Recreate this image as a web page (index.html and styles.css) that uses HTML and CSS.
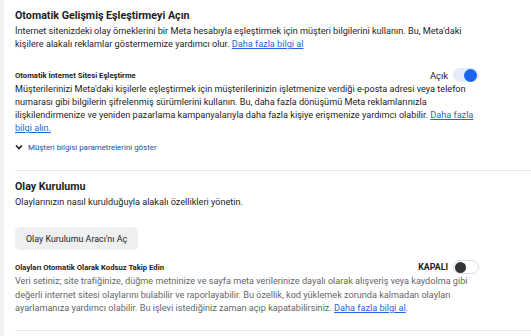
FILE: index.html
```html
<!DOCTYPE html>
<html lang="tr">
<head>
    <meta charset="UTF-8">
    <meta name="viewport" content="width=device-width, initial-scale=1.0">
    <title>Olay Ayarları</title>
    <link rel="stylesheet" href="styles.css">
</head>
<body>
    <div class="panel">

        <!-- Gelişmiş eşleştirme -->
        <section class="bolum bolum-eslestirme">
            <h2>Otomatik Gelişmiş Eşleştirmeyi Açın</h2>
            <p class="aciklama">İnternet sitenizdeki olay örneklerini bir Meta hesabıyla eşleştirmek için müşteri bilgilerini kullanın. Bu, Meta'daki kişilere alakalı reklamlar göstermemize yardımcı olur. <a href="#">Daha fazla bilgi al</a></p>

            <div class="ayar">
                <div class="ayar-baslik">
                    <h3>Otomatik İnternet Sitesi Eşleştirme</h3>
                    <div class="anahtar-alani">
                        <span class="durum">Açık</span>
                        <span class="anahtar acik"><span class="topuz"></span></span>
                    </div>
                </div>
                <p class="metin">Müşterilerinizi Meta'daki kişilerle eşleştirmek için müşterilerinizin işletmenize verdiği e-posta adresi veya telefon numarası gibi bilgilerin şifrelenmiş sürümlerini kullanın. Bu, daha fazla dönüşümü Meta reklamlarınızla ilişkilendirmenize ve yeniden pazarlama kampanyalarıyla daha fazla kişiye erişmenize yardımcı olabilir. <a href="#">Daha fazla bilgi alın.</a></p>
                <a href="#" class="goster">
                    <svg width="8" height="6" viewBox="0 0 8 6"><path d="M1 1.5 L4 4.5 L7 1.5" fill="none" stroke="#1c1e21" stroke-width="1.6"/></svg>
                    Müşteri bilgisi parametrelerini göster
                </a>
            </div>
        </section>

        <!-- Olay kurulumu -->
        <section class="bolum bolum-kurulum">
            <h2>Olay Kurulumu</h2>
            <p class="aciklama">Olaylarınızın nasıl kurulduğuyla alakalı özellikleri yönetin.</p>

            <button class="btn-arac">Olay Kurulumu Aracı'nı Aç</button>

            <div class="ayar">
                <div class="ayar-baslik">
                    <h3>Olayları Otomatik Olarak Kodsuz Takip Edin</h3>
                    <div class="anahtar-alani">
                        <span class="durum kalin">KAPALI</span>
                        <span class="anahtar"><span class="topuz"></span></span>
                    </div>
                </div>
                <p class="metin gri">Veri setiniz; site trafiğinize, düğme metninize ve sayfa meta verilerinize dayalı olarak alışveriş veya kaydolma gibi değerli internet sitesi olaylarını bulabilir ve raporlayabilir. Bu özellik, kod yüklemek zorunda kalmadan olayları ayarlamanıza yardımcı olabilir. Bu işlevi istediğiniz zaman açıp kapatabilirsiniz. <a href="#">Daha fazla bilgi al</a>.</p>
            </div>
        </section>

    </div>
</body>
</html>
```

FILE: styles.css
```css
* {
    margin: 0;
    padding: 0;
    box-sizing: border-box;
    font-family: Roboto, "Liberation Sans", sans-serif;
}

body {
    background-color: #f0f2f5;
    color: #1c1e21;
}

.panel {
    margin-left: 4px;
    min-height: 336px;
    background-color: #fff;
    padding-left: 11px;
}

.bolum {
    border-bottom: 1px solid #e4e6eb;
    padding-top: 9px;
}

.bolum > * {
    max-width: 464px;
}

.bolum-eslestirme {
    padding-bottom: 17px;
}

.bolum-kurulum {
    padding-bottom: 14px;
}

h2 {
    font-size: 10.7px;
    line-height: 14px;
    font-weight: bold;
}

.aciklama,
.metin {
    font-size: 9.15px;
    line-height: 13px;
}

.aciklama {
    margin-top: 2px;
}

a {
    color: #1d68e0;
    text-decoration: underline;
}

.ayar {
    margin-top: 16px;
}

.ayar-baslik {
    display: flex;
    justify-content: space-between;
    align-items: center;
    height: 16px;
}

h3 {
    font-size: 7.7px;
    font-weight: bold;
}

.anahtar-alani {
    display: flex;
    align-items: center;
    gap: 5px;
}

.durum {
    font-size: 9.4px;
}

.durum.kalin {
    font-size: 8.8px;
    font-weight: bold;
}

.anahtar {
    display: flex;
    align-items: center;
    width: 26px;
    height: 14px;
    border-radius: 7px;
    border: 1px solid #dadde1;
    background-color: #fff;
    padding: 0 1px;
}

.anahtar .topuz {
    width: 11px;
    height: 11px;
    border-radius: 50%;
    background-color: #303338;
}

.anahtar.acik {
    justify-content: flex-end;
    background-color: #e4ebf9;
    border-color: #e4ebf9;
}

.anahtar.acik .topuz {
    width: 13px;
    height: 13px;
    background-color: #1b66f0;
}

.metin.gri {
    color: #65676b;
    line-height: 13.5px;
}

.goster {
    display: flex;
    align-items: center;
    gap: 5px;
    height: 12px;
    margin-top: 6px;
    font-size: 7.9px;
    color: #2c4a9c;
    text-decoration: none;
}

.btn-arac {
    display: block;
    margin-top: 18px;
    padding: 0 11px;
    height: 23px;
    border: none;
    border-radius: 5px;
    background-color: #eeeff1;
    color: #1c1e21;
    font-size: 8.9px;
    cursor: pointer;
}

.bolum-kurulum .ayar {
    margin-top: 9px;
}
```
